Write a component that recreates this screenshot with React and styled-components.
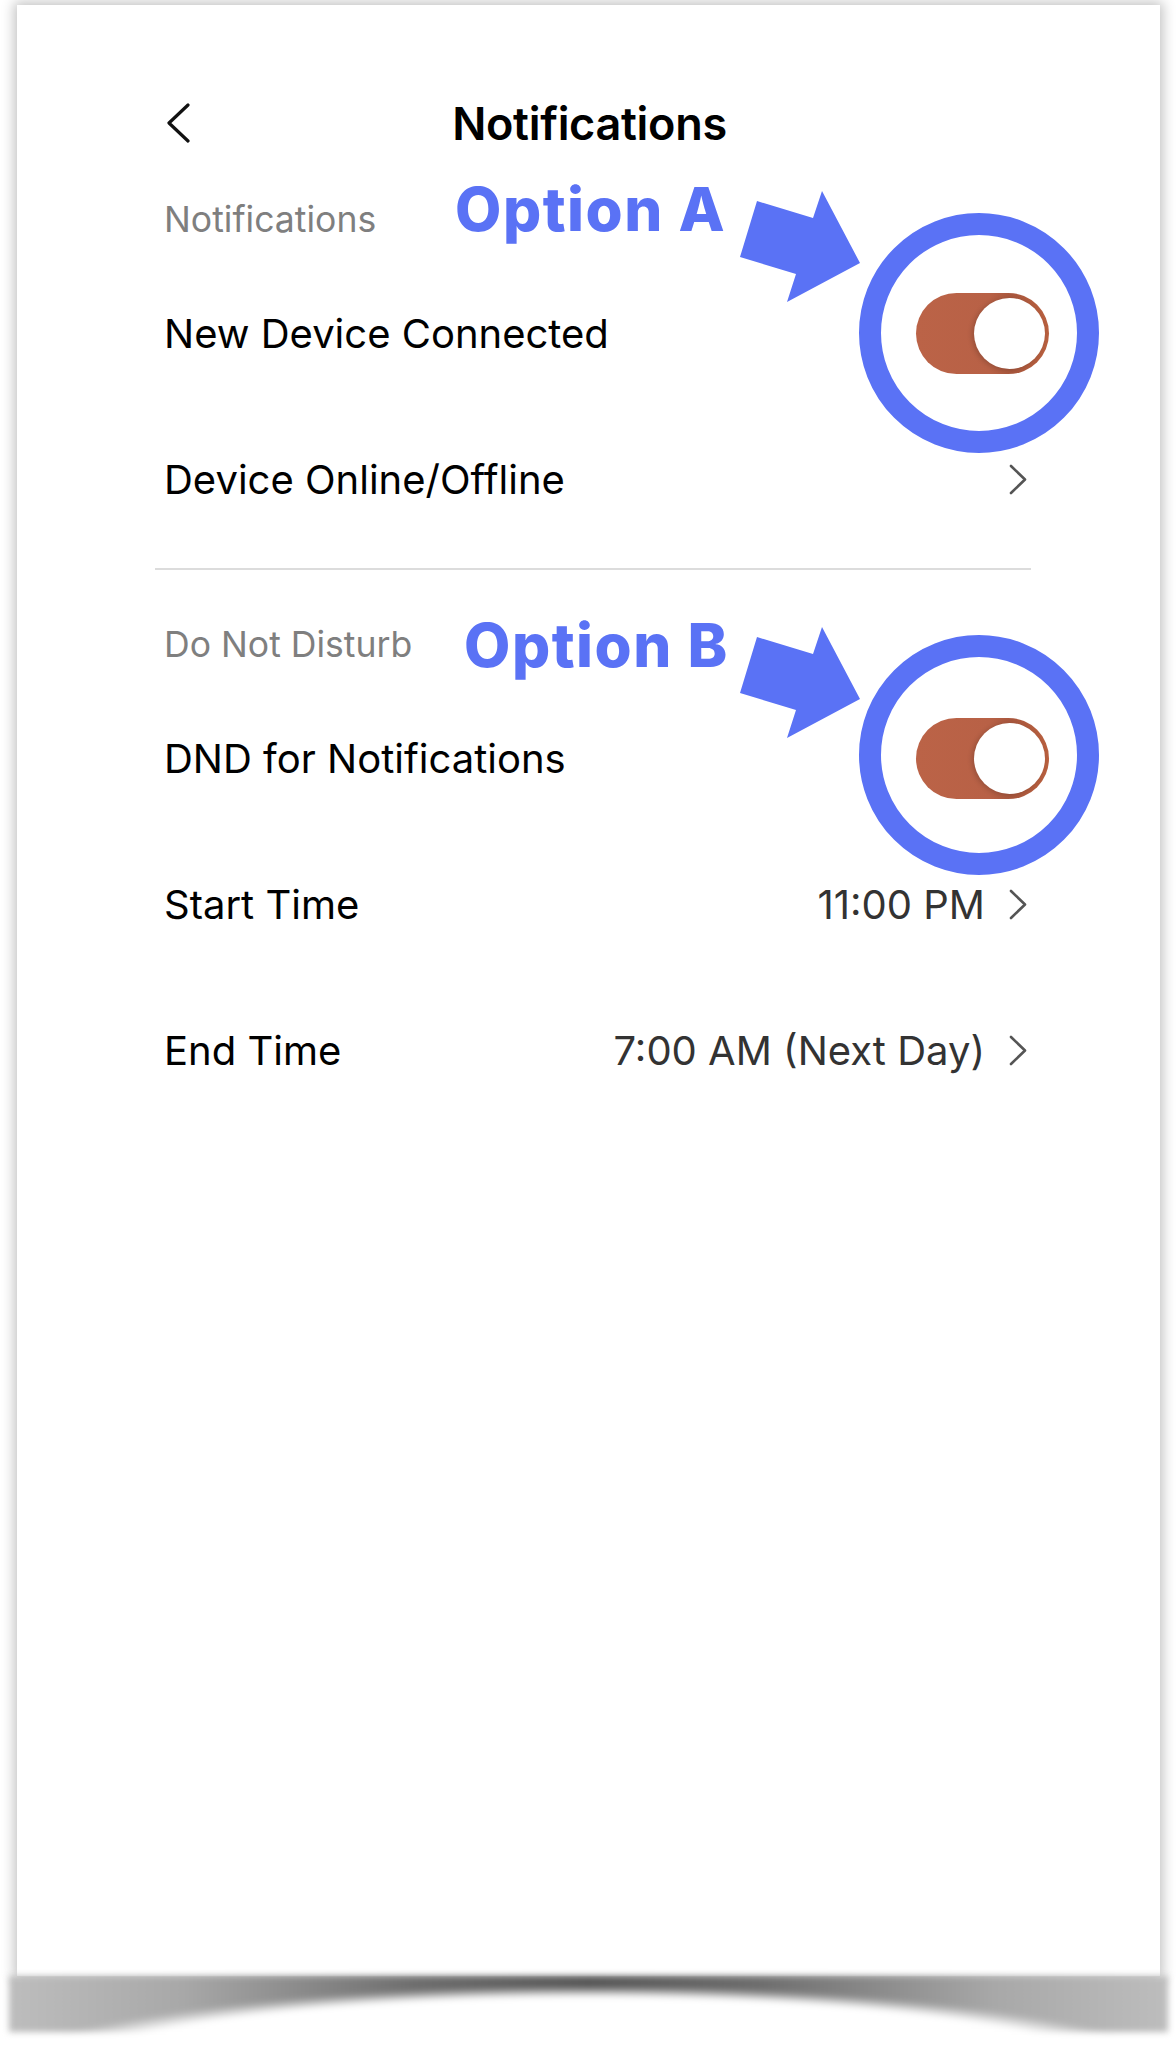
import React from "react";
import styled, { createGlobalStyle } from "styled-components";

const GlobalStyle = createGlobalStyle`
  html {
    background: #fff;
  }
  body {
    margin: 0;
    padding: 0;
    font-family: Inter, "Noto Sans", sans-serif;
    -webkit-font-smoothing: antialiased;
  }
`;

const Page = styled.div`
  width: 1176px;
  height: 2045px;
  padding: 5px 16px 0 17px;
  box-sizing: border-box;
  overflow: hidden;
`;

const Card = styled.div`
  position: relative;
  height: 1972px;
  padding-top: 68px;
  background: #fff;
  box-shadow: 0 0 12px 3px rgba(0, 0, 0, 0.24);
  border-bottom: 1px solid #e2e2e2;
  box-sizing: border-box;

  &::after {
    content: "";
    position: absolute;
    left: -8px;
    right: -8px;
    top: 100%;
    height: 56px;
    background: radial-gradient(
        ellipse 640px 110px at 50% 120px,
        #fff 90%,
        rgba(255, 255, 255, 0) 100%
      ),
      linear-gradient(
        90deg,
        #bdbdbd 0%,
        #a8a8a8 15%,
        #6e6e6e 35%,
        #555 50%,
        #6e6e6e 65%,
        #a8a8a8 85%,
        #bdbdbd 100%
      );
    filter: blur(3px);
  }
`;

const Header = styled.div`
  display: grid;
  grid-template-columns: 1fr auto 1fr;
  align-items: center;
  height: 100px;
  padding: 0 147px 0 149px;
`;

const Title = styled.h1`
  margin: 0;
  font-size: 45px;
  font-weight: 600;
  color: #000;
  letter-spacing: -0.3px;
`;

const SectionLabel = styled.div`
  padding: 25px 147px 18px;
  font-size: 35.6px;
  line-height: 44px;
  color: #7f7f7f;
`;

const Row = styled.div`
  display: flex;
  align-items: center;
  justify-content: space-between;
  height: 146px;
  padding: 0 111px 0 147px;
`;

const RowLabel = styled.span`
  font-size: 40px;
  color: #000;
`;

const Trailing = styled.div`
  display: flex;
  align-items: center;
  gap: 24px;
`;

const Value = styled.span`
  font-size: 40px;
  color: #333;
`;

const ChevronIcon = styled.svg`
  display: block;
  margin-right: 22px;
`;

const Divider = styled.hr`
  border: 0;
  height: 2px;
  background: #dcdcdc;
  margin: 16px 129px 28px 138px;
`;

const Toggle = styled.span`
  display: flex;
  align-items: center;
  justify-content: flex-end;
  width: 133px;
  height: 81px;
  padding: 0 4px;
  box-sizing: border-box;
  border-radius: 41px;
  background: linear-gradient(
    90deg,
    #bb6347 0%,
    #b86146 55%,
    #a9573d 72%,
    #b9603f 100%
  );
`;

const Knob = styled.span`
  width: 71px;
  height: 71px;
  border-radius: 50%;
  background: #fff;
  box-shadow: -2px 1px 5px rgba(0, 0, 0, 0.18);
`;

const Annotation = styled.div`
  position: absolute;
  left: 0;
  right: 0;
  top: ${(p) => p.$top}px;
  height: 290px;
  pointer-events: none;
`;

const OptionLabel = styled.span`
  position: absolute;
  left: ${(p) => p.$left}px;
  top: 0;
  font-family: Inter, "Open Sans", sans-serif;
  font-weight: 800;
  font-size: 60px;
  line-height: 1;
  letter-spacing: 1.5px;
  color: #5a72f5;
`;

const Marker = styled.svg`
  position: absolute;
  left: 718px;
  top: 0;
`;

const BackIcon = () => (
  <svg width="24" height="40" viewBox="0 0 24 40">
    <polyline
      points="22,2 3,20 22,38"
      fill="none"
      stroke="#111"
      strokeWidth="3.2"
      strokeLinecap="round"
      strokeLinejoin="round"
    />
  </svg>
);

const Chevron = () => (
  <ChevronIcon width="18" height="31" viewBox="0 0 18 31">
    <polyline
      points="2,2 16,15.5 2,29"
      fill="none"
      stroke="#555"
      strokeWidth="2.6"
      strokeLinecap="round"
      strokeLinejoin="round"
    />
  </ChevronIcon>
);

const Switch = () => (
  <Toggle>
    <Knob />
  </Toggle>
);

const Callout = ({ top, left, ringY, text }) => (
  <Annotation $top={top}>
    <OptionLabel $left={left}>{text}</OptionLabel>
    <Marker width="370" height="290" viewBox="0 0 370 290">
      <polygon
        points="22,22 78,39 87,12 125,84 52,123 61,95 5,78"
        fill="#5a72f5"
      />
      <circle
        cx="244"
        cy={ringY}
        r="109"
        fill="none"
        stroke="#5a72f5"
        strokeWidth="22"
      />
    </Marker>
  </Annotation>
);

const App = () => {
  return (
    <Page>
      <GlobalStyle />
      <Card>
        <Header>
          <BackIcon />
          <Title>Notifications</Title>
          <span />
        </Header>

        <SectionLabel>Notifications</SectionLabel>
        <Row>
          <RowLabel>New Device Connected</RowLabel>
          <Switch />
        </Row>
        <Row>
          <RowLabel>Device Online/Offline</RowLabel>
          <Chevron />
        </Row>

        <Divider />

        <SectionLabel>Do Not Disturb</SectionLabel>
        <Row>
          <RowLabel>DND for Notifications</RowLabel>
          <Switch />
        </Row>
        <Row>
          <RowLabel>Start Time</RowLabel>
          <Trailing>
            <Value>11:00 PM</Value>
            <Chevron />
          </Trailing>
        </Row>
        <Row>
          <RowLabel>End Time</RowLabel>
          <Trailing>
            <Value>7:00 AM (Next Day)</Value>
            <Chevron />
          </Trailing>
        </Row>

        <Callout top={174} left={438} ringY={154} text="Option A" />
        <Callout top={610} left={447} ringY={140} text="Option B" />
      </Card>
    </Page>
  );
};

export default App;
